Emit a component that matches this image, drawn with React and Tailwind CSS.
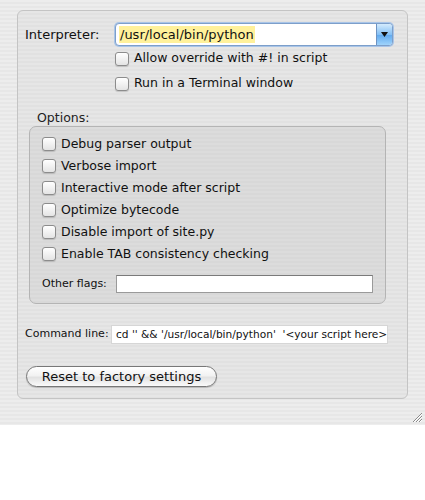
import React from "react";

const font = { fontFamily: '"DejaVu Sans", "Liberation Sans", sans-serif' };

function Check({ label }) {
  return (
    <div className="flex items-center h-[22px]">
      <div className="w-[14px] h-[14px] rounded-[3px] border border-[#8c8c8c] bg-[linear-gradient(#ffffff,#e4e4e4)] shadow-[0_1px_1px_rgba(0,0,0,0.15)] shrink-0" />
      <span className="ml-[5px] text-[#111] text-[12.5px]">{label}</span>
    </div>
  );
}

export default function App() {
  return (
    <div className="w-[425px] h-[500px] bg-white" style={font}>
      <div className="relative h-[425px] pt-[10px] px-[17px] bg-[repeating-linear-gradient(180deg,#ededed_0px,#ededed_2px,#e7e7e7_2px,#e7e7e7_4px)]">
        <div className="h-[389px] rounded-[6px] border border-[#c4c4c4] bg-[repeating-linear-gradient(180deg,#e6e6e6_0px,#e6e6e6_2px,#e1e1e1_2px,#e1e1e1_4px)] pl-[7px] pt-[12px]">
          {/* Interpreter row */}
          <div className="flex items-center h-[23px]">
            <div className="w-[90px] text-[13px] text-[#111]">Interpreter:</div>
            <div className="flex w-[278px] h-[23px] rounded-[4px] border border-[#7d9fca] shadow-[0_0_0_1px_#a9c5e8] bg-white overflow-hidden">
              <div className="flex-1 flex items-center pl-[3px]">
                <span className="text-[13px] text-[#111] bg-[#fff19b] px-[1px] leading-[17px]">/usr/local/bin/python</span>
              </div>
              <div className="w-[16px] h-full bg-[linear-gradient(#d4ebfd,#84c0f5_50%,#5fa9ef_51%,#9fd3fb)] border-l border-[#6e93c2] flex items-center justify-center">
                <svg width="7" height="5" viewBox="0 0 7 5"><path d="M0 0 L7 0 L3.5 5 Z" fill="#111" /></svg>
              </div>
            </div>
          </div>
          <div className="ml-[90px] mt-[6px]">
            <div className="h-[13px] flex items-center">
              <Check label="Allow override with #! in script" />
            </div>
            <div className="h-[13px] flex items-center mt-[12px]">
              <Check label="Run in a Terminal window" />
            </div>
          </div>

          {/* Options */}
          <div className="ml-[12px] mt-[20px] text-[12.5px] text-[#222] leading-[16px]">Options:</div>
          <div className="ml-[4px] w-[357px] h-[178px] rounded-[7px] border border-[#b4b4b4] bg-[repeating-linear-gradient(180deg,#dcdcdc_0px,#dcdcdc_2px,#d8d8d8_2px,#d8d8d8_4px)] pl-[12px] pt-[6px]">
            <Check label="Debug parser output" />
            <Check label="Verbose import" />
            <Check label="Interactive mode after script" />
            <Check label="Optimize bytecode" />
            <Check label="Disable import of site.py" />
            <Check label="Enable TAB consistency checking" />
            <div className="flex items-center mt-[10px] h-[18px]">
              <div className="w-[74px] text-[11px] text-[#111]">Other flags:</div>
              <div className="w-[257px] h-[18px] bg-white border border-[#9a9a9a] border-t-[#7a7a7a]" />
            </div>
          </div>

          {/* Command line */}
          <div className="flex items-center mt-[21px] h-[19px]">
            <div className="w-[86px] text-[11px] text-[#111]">Command line:</div>
            <div className="w-[277px] h-[19px] bg-white border border-[#d6d6d6] overflow-hidden whitespace-nowrap pl-[4px] flex items-center">
              <span className="text-[10.6px] text-[#111]">cd '' &amp;&amp; '/usr/local/bin/python'&nbsp; '&lt;your script here&gt;'</span>
            </div>
          </div>

          {/* Reset button */}
          <div className="mt-[22px] ml-[1px]">
            <button className="w-[191px] h-[21px] rounded-full border border-[#777] bg-[linear-gradient(#ffffff,#f2f2f2_45%,#e2e2e2_55%,#fafafa)] shadow-[0_1px_1px_rgba(0,0,0,0.2)] text-[13px] text-[#111] flex items-center justify-center">
              Reset to factory settings
            </button>
          </div>
        </div>

        <svg className="absolute right-[2px] bottom-[2px]" width="11" height="11" viewBox="0 0 11 11">
          <path d="M1 10 L10 1 M4 10 L10 4 M7 10 L10 7" stroke="#8a8a8a" strokeWidth="1" />
          <path d="M2 10 L10 2 M5 10 L10 5 M8 10 L10 8" stroke="#ffffff" strokeWidth="1" />
        </svg>
      </div>
    </div>
  );
}
